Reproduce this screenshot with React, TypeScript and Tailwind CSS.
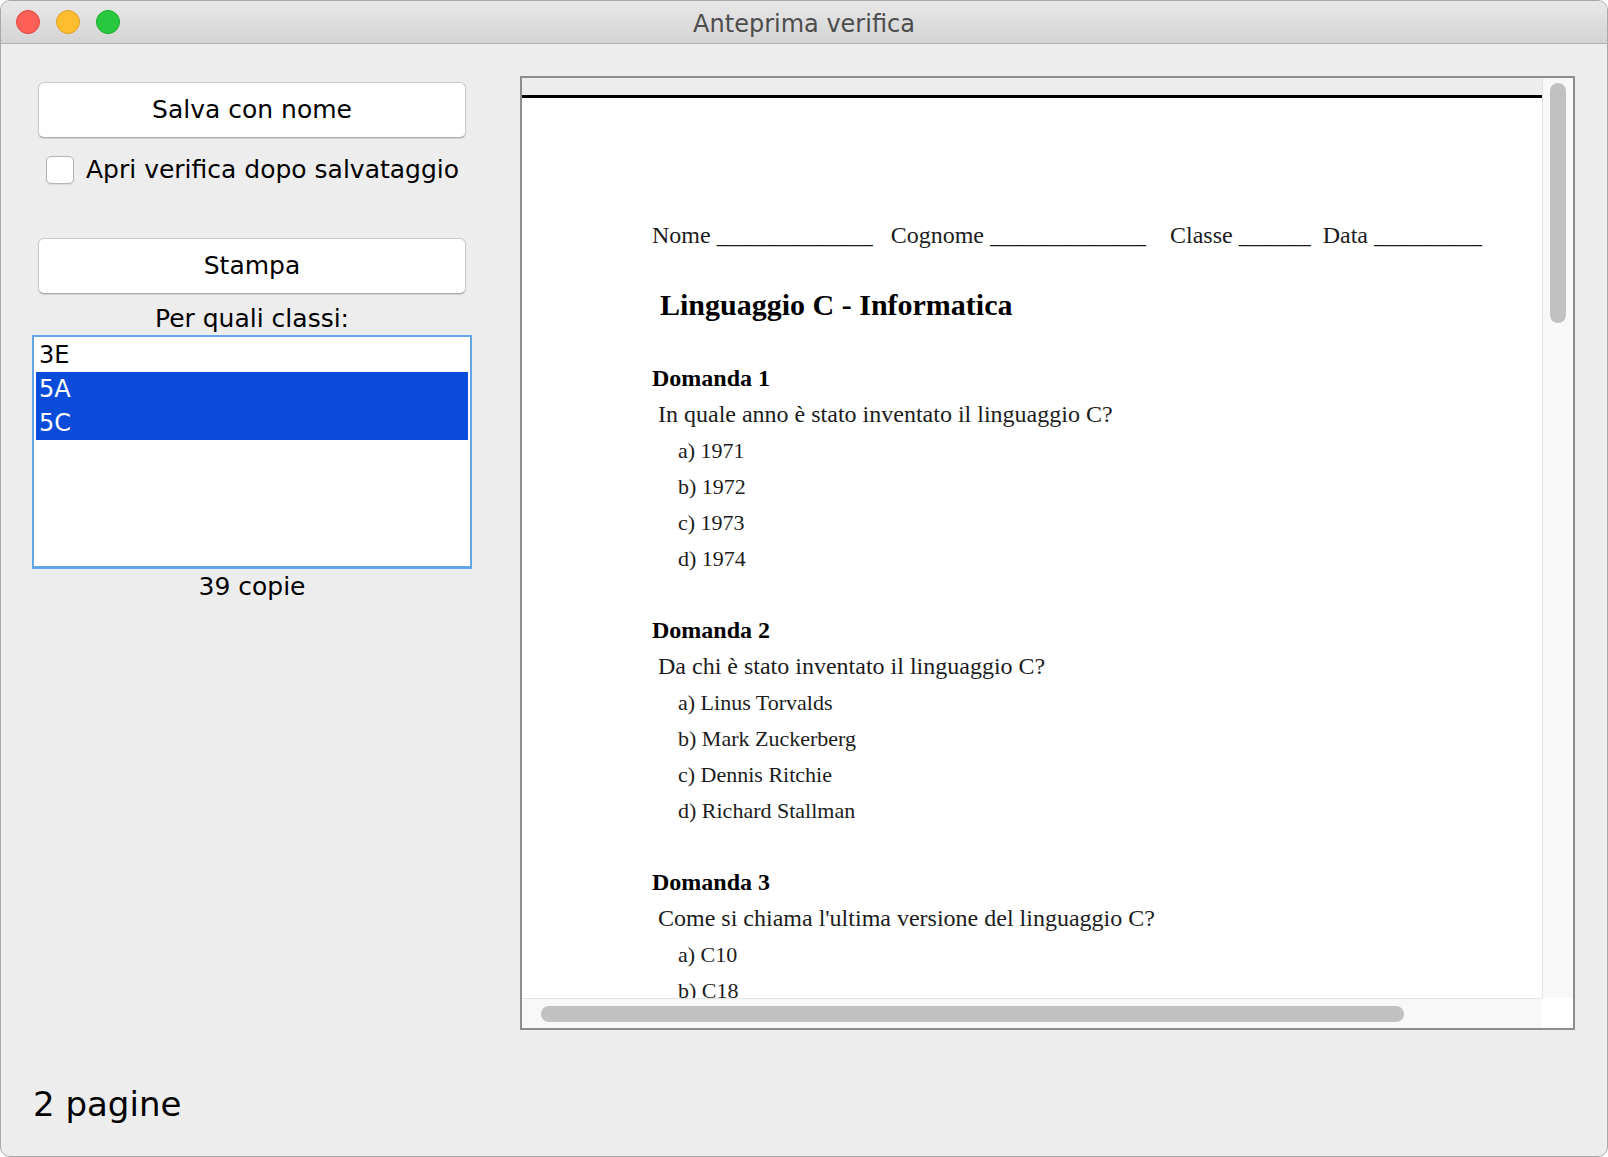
import React from "react";

// finestra "Anteprima verifica"
const ui = "font-['DejaVu_Sans','Lucida_Grande',sans-serif]";
const serif = "font-['Liberation_Serif','Times_New_Roman',serif]";

type Domanda = { n: number; testo: string; risposte: string[] };

const domande: Domanda[] = [
  {
    n: 1,
    testo: "In quale anno è stato inventato il linguaggio C?",
    risposte: ["a) 1971", "b) 1972", "c) 1973", "d) 1974"],
  },
  {
    n: 2,
    testo: "Da chi è stato inventato il linguaggio C?",
    risposte: ["a) Linus Torvalds", "b) Mark Zuckerberg", "c) Dennis Ritchie", "d) Richard Stallman"],
  },
  {
    n: 3,
    testo: "Come si chiama l'ultima versione del linguaggio C?",
    risposte: ["a) C10", "b) C18"],
  },
];

const classi = [
  { nome: "3E", selezionata: false },
  { nome: "5A", selezionata: true },
  { nome: "5C", selezionata: true },
];

function TitleBar() {
  return (
    <header className="grid h-[43px] shrink-0 grid-cols-[1fr_auto_1fr] items-center border-b border-[#b3b3b3] bg-linear-to-b from-[#e8e8e8] to-[#d4d4d4]">
      <div className="flex items-center gap-[16px] pl-[15px]">
        <span className="h-[24px] w-[24px] rounded-full border border-[#e0443e] bg-[#fe5f57]" />
        <span className="h-[24px] w-[24px] rounded-full border border-[#dea123] bg-[#febc2e]" />
        <span className="h-[24px] w-[24px] rounded-full border border-[#1aab29] bg-[#28c840]" />
      </div>
      <h1 className={`${ui} pt-[3px] text-[24px] leading-[30px] text-[#4d4d4d]`}>Anteprima verifica</h1>
      <div />
    </header>
  );
}

function MacButton({ label, className = "" }: { label: string; className?: string }) {
  return (
    <button
      className={`mx-[6px] flex h-[56px] items-center justify-center rounded-[6px] border border-[#c9c9c9] border-b-[#acacac] bg-white text-[25px] leading-[30px] text-black shadow-[0_1px_1px_rgba(0,0,0,0.12)] ${className}`}
    >
      {label}
    </button>
  );
}

function LeftColumn() {
  return (
    <div className={`${ui} flex w-[440px] shrink-0 flex-col text-black`}>
      <MacButton label="Salva con nome" className="mt-[6px]" />

      <label className="mt-[18px] flex h-[28px] items-center gap-[12px] pl-[14px] text-[25px] leading-[30px]">
        <span className="h-[28px] w-[28px] rounded-[5px] border border-[#b5b5b5] bg-white shadow-[0_1px_1px_rgba(0,0,0,0.08)]" />
        Apri verifica dopo salvataggio
      </label>

      <MacButton label="Stampa" className="mt-[54px]" />

      <p className="mt-[10px] text-center text-[25px] leading-[30px]">Per quali classi:</p>

      <div className="mt-[1px] flex h-[234px] flex-col border-2 border-b-[3px] border-[#62a8e8] bg-white px-[2px] pt-[1px]">
        {classi.map((c) => (
          <div
            key={c.nome}
            className={`h-[34px] pl-[3px] text-[24px] leading-[34px] ${
              c.selezionata ? "bg-[#0a4bd9] text-white" : "text-black"
            }`}
          >
            {c.nome}
          </div>
        ))}
      </div>

      <p className="mt-[3px] text-center text-[25px] leading-[30px]">39 copie</p>
    </div>
  );
}

function Pagina() {
  return (
    <div className={`${serif} flex flex-col bg-white pl-[130px] pt-[119px] text-[24px] leading-[36px] text-[#1c1c1c]`}>
      <p className="h-[36px] whitespace-pre">Nome _____________   Cognome _____________    Classe ______  Data _________</p>

      <h2 className="mt-[34px] h-[36px] pl-[8px] text-[30px] font-bold leading-[36px] text-black">
        Linguaggio C - Informatica
      </h2>

      <div className="mt-[37px] flex flex-col gap-[36px]">
        {domande.map((d) => (
          <section key={d.n} className="flex flex-col">
            <h3 className="h-[36px] font-bold text-black">Domanda {d.n}</h3>
            <p className="h-[36px] pl-[6px]">{d.testo}</p>
            {d.risposte.map((r) => (
              <p key={r} className="h-[36px] pl-[26px] pt-[1px] text-[22px] leading-[35px]">
                {r}
              </p>
            ))}
          </section>
        ))}
      </div>
    </div>
  );
}

function Anteprima() {
  return (
    <div className="flex h-[954px] w-[1055px] shrink-0 flex-col border-2 border-[#8d8d8d]">
      <div className="flex min-h-0 flex-1">
        <div className="flex min-w-0 flex-1 flex-col overflow-hidden bg-white">
          <div className="h-[17px] shrink-0 bg-[#ededed]" />
          <div className="h-[3px] shrink-0 bg-black" />
          <Pagina />
        </div>
        <div className="w-[31px] shrink-0 border-l border-[#e4e4e4] bg-[#f8f8f8] pl-[7px] pt-[5px]">
          <div className="h-[240px] w-[16px] rounded-full bg-[#c1c1c1]" />
        </div>
      </div>
      <div className="flex h-[30px] shrink-0">
        <div className="flex-1 border-t border-[#e4e4e4] bg-[#f8f8f8] pl-[19px] pt-[7px]">
          <div className="h-[16px] w-[863px] rounded-full bg-[#c1c1c1]" />
        </div>
        <div className="w-[31px] bg-white" />
      </div>
    </div>
  );
}

export default function App() {
  return (
    <main className="h-[1157px] w-[1608px] bg-white">
      <div className="flex h-full flex-col overflow-hidden rounded-[10px] border border-[#a9a9a9] bg-[#ededed]">
        <TitleBar />

        <div className="flex gap-[48px] pl-[31px] pt-[32px]">
          <LeftColumn />
          <Anteprima />
        </div>

        <footer className={`${ui} mt-[54px] pl-[32px] text-[34px] leading-[40px] text-black`}>2 pagine</footer>
      </div>
    </main>
  );
}
